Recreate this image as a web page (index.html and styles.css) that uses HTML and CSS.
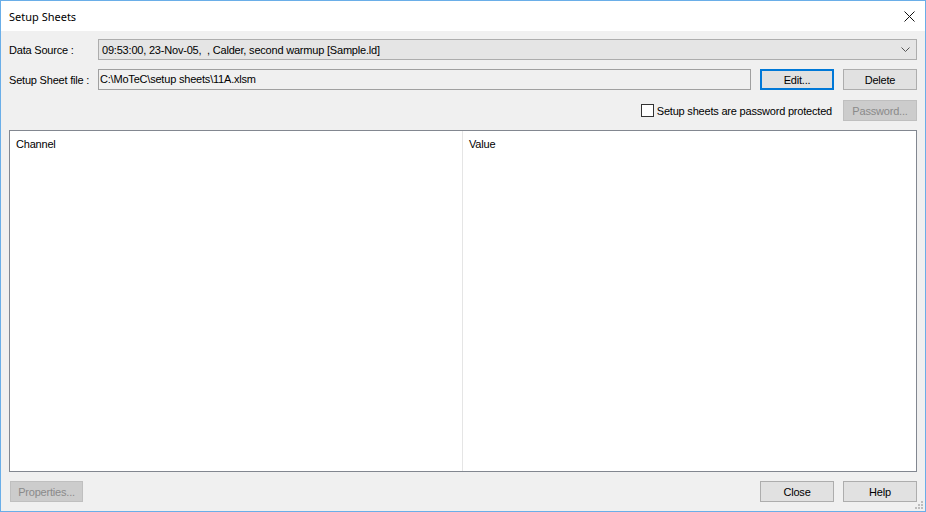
FILE: index.html
```html
<!DOCTYPE html>
<html lang="en">
<head>
    <meta charset="UTF-8">
    <title>Setup Sheets</title>
    <link rel="stylesheet" href="styles.css">
</head>
<body>
    <div class="window">
        <!-- Title bar -->
        <div class="titlebar">
            <span class="title">Setup Sheets</span>
            <svg class="close-icon" width="11" height="11" viewBox="0 0 11 11">
                <path d="M0.5 0.5 L10.5 10.5 M10.5 0.5 L0.5 10.5" stroke="#111" stroke-width="1" fill="none"/>
            </svg>
        </div>

        <div class="dialog">
            <div class="row">
                <label class="field-label">Data Source :</label>
                <div class="combo">
                    <span class="combo-text">09:53:00, 23-Nov-05,  , Calder, second warmup [Sample.ld]</span>
                    <svg class="chevron" width="9" height="5" viewBox="0 0 9 5">
                        <path d="M0.5 0.5 L4.5 4.5 L8.5 0.5" stroke="#555" stroke-width="1" fill="none"/>
                    </svg>
                </div>
            </div>

            <div class="row row-file">
                <label class="field-label">Setup Sheet file :</label>
                <div class="textbox">C:\MoTeC\setup sheets\11A.xlsm</div>
                <button class="btn btn-default">Edit...</button>
                <button class="btn">Delete</button>
            </div>

            <div class="row row-password">
                <label class="check"><span class="check-box"></span>Setup sheets are password protected</label>
                <button class="btn" disabled>Password...</button>
            </div>

            <div class="list">
                <div class="col col-channel"><div class="col-head">Channel</div></div>
                <div class="col col-value"><div class="col-head">Value</div></div>
            </div>

            <div class="row footer">
                <button class="btn" disabled>Properties...</button>
                <span class="spacer"></span>
                <button class="btn">Close</button>
                <button class="btn">Help</button>
            </div>
        </div>

        <svg class="grip" width="10" height="10" viewBox="0 0 10 10">
            <rect x="7" y="1" width="2" height="2" fill="#bdbdbd"/>
            <rect x="4" y="4" width="2" height="2" fill="#bdbdbd"/>
            <rect x="7" y="4" width="2" height="2" fill="#bdbdbd"/>
            <rect x="1" y="7" width="2" height="2" fill="#bdbdbd"/>
            <rect x="4" y="7" width="2" height="2" fill="#bdbdbd"/>
            <rect x="7" y="7" width="2" height="2" fill="#bdbdbd"/>
        </svg>
    </div>
</body>
</html>
```

FILE: styles.css
```css
* { margin: 0; padding: 0; box-sizing: border-box; }

body {
    font-family: "Liberation Sans", Arial, sans-serif;
    font-size: 11px;
    letter-spacing: -0.2px;
    color: #000;
    background: #fff;
}

.window {
    position: relative;
    width: 926px;
    height: 512px;
    border: 1px solid #6aaee8;
    display: flex;
    flex-direction: column;
    background: #f0f0f0;
}

.titlebar {
    height: 30px;
    background: #fff;
    display: flex;
    align-items: center;
    justify-content: space-between;
    padding: 0 10px 0 8px;
}

.title {
    font-family: "Noto Sans", "Liberation Sans", sans-serif;
    font-size: 11px;
    letter-spacing: 0;
    color: #000;
}

.close-icon {
    display: block;
}

.dialog {
    flex: 1;
    display: flex;
    flex-direction: column;
    padding: 8px 8px 9px 8px;
    min-height: 0;
}

.row {
    display: flex;
    align-items: center;
    height: 21px;
    flex-shrink: 0;
}

.row-file {
    margin-top: 9px;
}

.row-password {
    margin-top: 10px;
    justify-content: flex-end;
}

.field-label {
    width: 89px;
    flex-shrink: 0;
    white-space: nowrap;
}

.combo {
    flex: 1;
    height: 21px;
    background: #e5e5e5;
    border: 1px solid #adadad;
    display: flex;
    align-items: center;
    justify-content: space-between;
    padding: 0 6px 0 3px;
}

.combo-text {
    white-space: pre;
}

.chevron {
    display: block;
}

.textbox {
    flex: 1;
    height: 21px;
    line-height: 19px;
    background: #f0f0f0;
    border: 1px solid #a0a0a0;
    padding: 0 1px;
    white-space: nowrap;
    margin-right: 9px;
}

.btn {
    width: 74px;
    height: 21px;
    background: #e1e1e1;
    border: 1px solid #adadad;
    font-family: inherit;
    font-size: inherit;
    letter-spacing: inherit;
    color: #000;
    flex-shrink: 0;
}

.btn + .btn {
    margin-left: 9px;
}

.btn-default {
    border: 2px solid #0078d7;
}

.btn:disabled {
    background: #cccccc;
    border-color: #bfbfbf;
    color: #8a8a8a;
}

.check {
    display: flex;
    align-items: center;
    margin-right: 11px;
}

.check-box {
    width: 13px;
    height: 13px;
    border: 1px solid #333;
    background: #fff;
    margin-right: 3px;
}

.list {
    flex: 1;
    margin-top: 9px;
    margin-bottom: 9px;
    border: 1px solid #828790;
    background: #fff;
    display: flex;
    min-height: 0;
}

.col-channel {
    width: 453px;
    border-right: 1px solid #e5e5e5;
}

.col-value {
    flex: 1;
}

.col-head {
    height: 26px;
    line-height: 26px;
    padding-left: 6px;
}

.footer .spacer {
    flex: 1;
}

.footer .btn:first-child {
    width: 73px;
    margin-left: 1px;
}

.footer .spacer + .btn {
    margin-left: 0;
}

.grip {
    position: absolute;
    right: 1px;
    bottom: 1px;
}
```
